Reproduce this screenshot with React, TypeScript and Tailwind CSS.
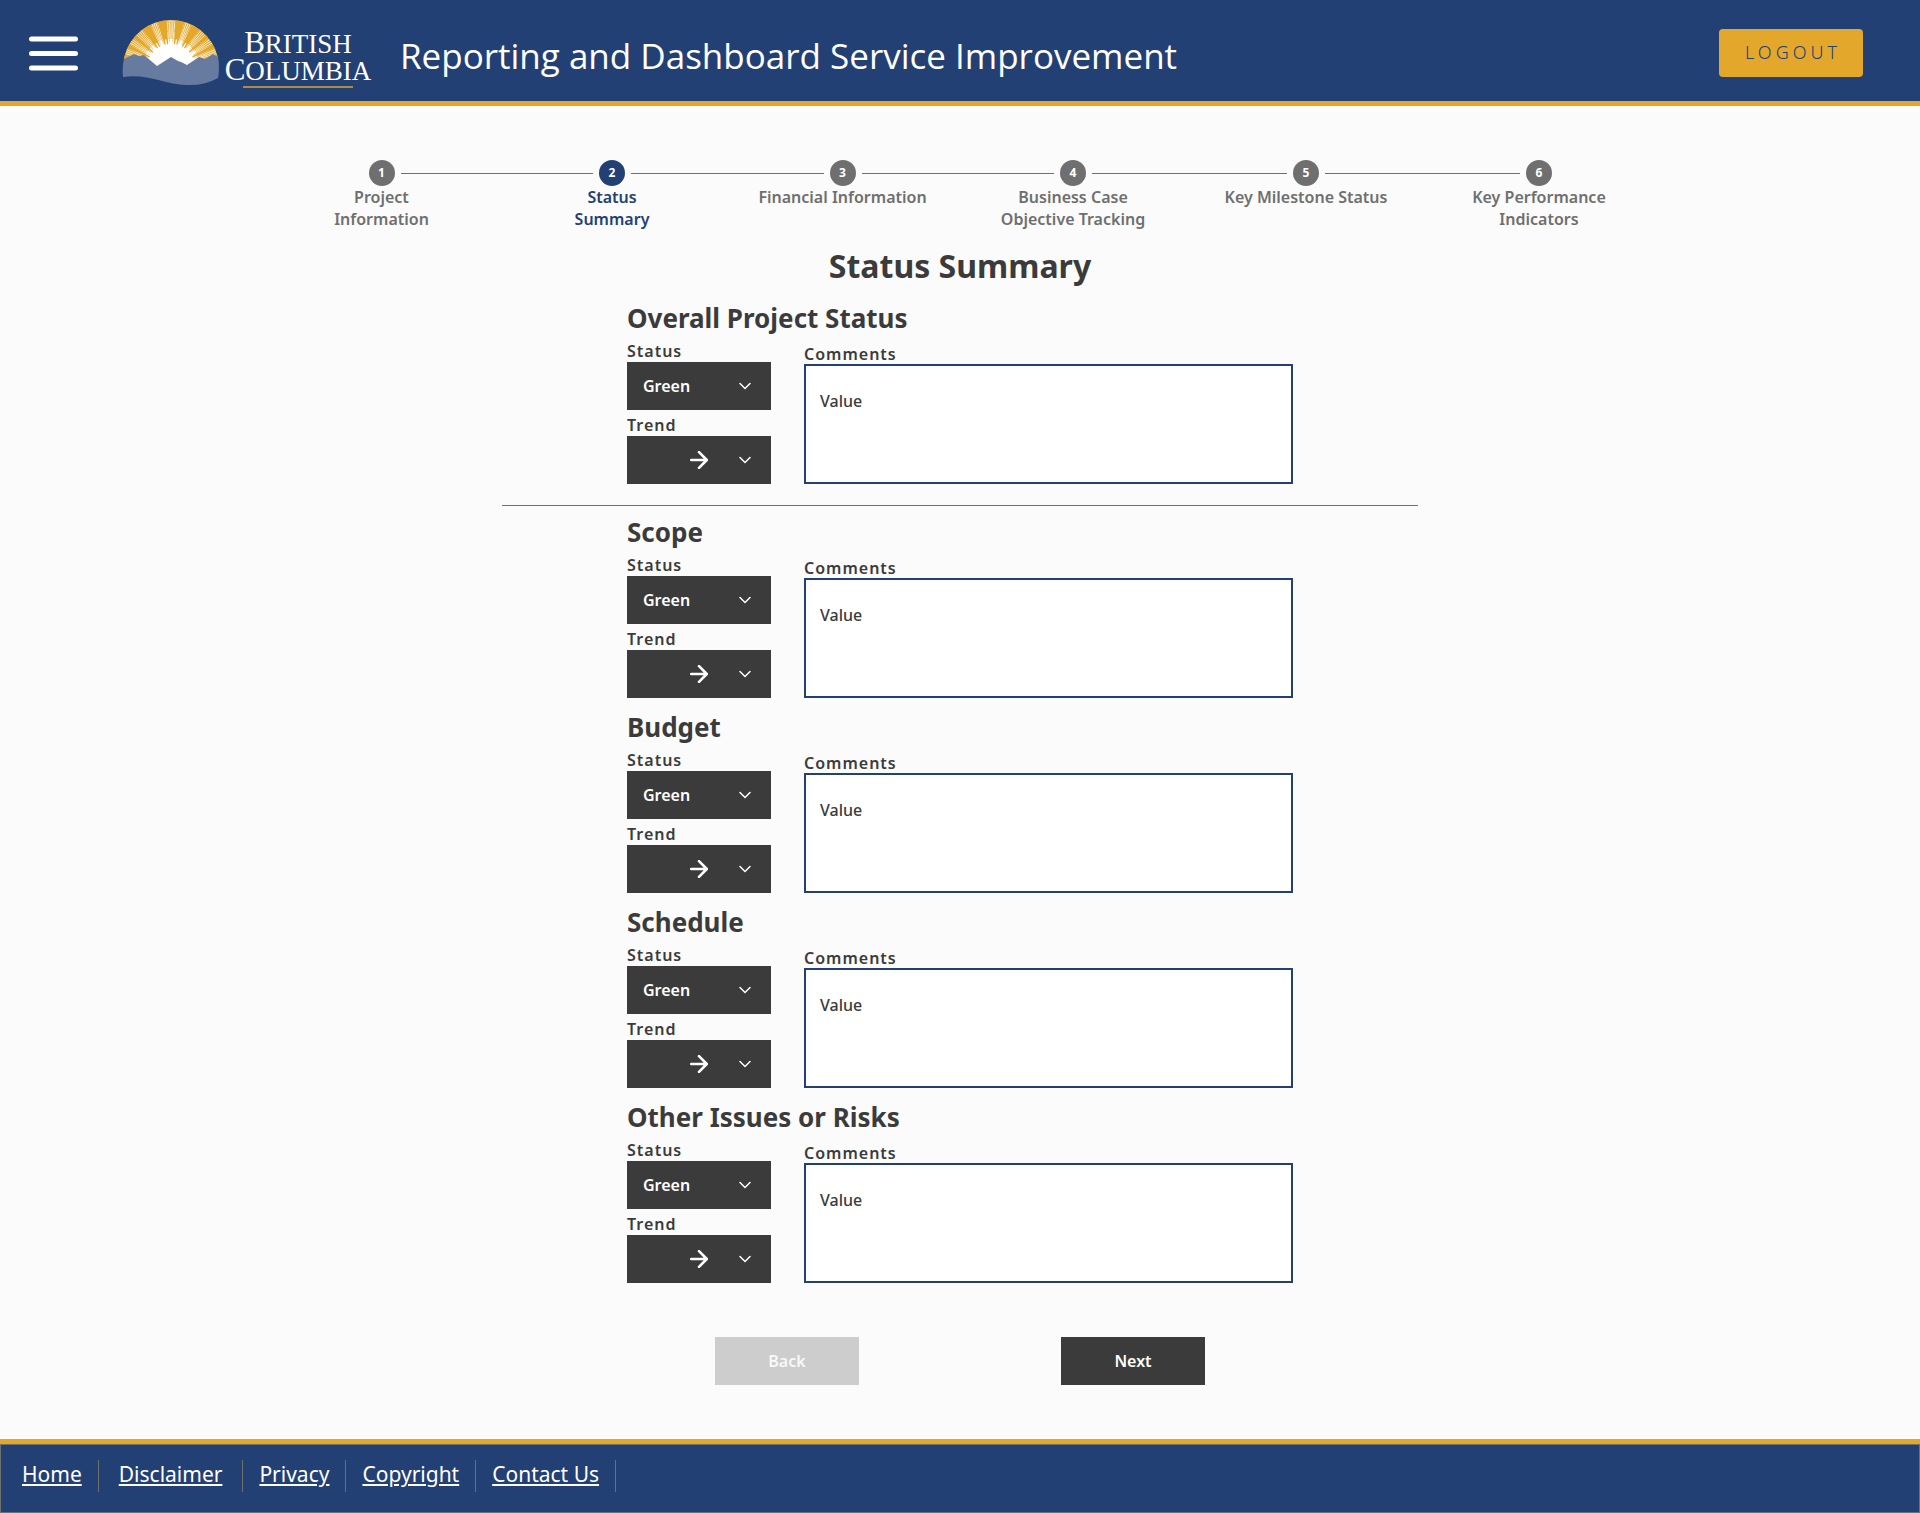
import React, { useId } from "react";

const spikeAngles = [-82, -76, -63, -49, -34, -28, -14, -8, 8, 14, 28, 34, 49, 63, 76, 82];
const fanAngles = [-70, -56, -41, -21, 0, 21, 41, 56, 70];

function at(angle: number, radius: number) {
  const a = (angle * Math.PI) / 180;
  return `${(51 + radius * Math.sin(a)).toFixed(2)} ${(52 - radius * Math.cos(a)).toFixed(2)}`;
}

function Emblem() {
  const clip = useId();
  return (
    <svg viewBox="0 0 100 76" className="h-[76px] w-[100px]" aria-hidden="true">
      <defs>
        <clipPath id={clip}>
          <path d="M4.050 42A48 48 0 0 1 97.950 42V52H4.050Z" />
        </clipPath>
      </defs>
      <g clipPath={`url(#${clip})`}>
        <rect x="0" y="0" width="102" height="56" fill="#E3A82B" />
        <circle cx="51" cy="52" r="29" fill="#fff" />
        {fanAngles.map((f) => (
          <g key={f} fill="none" stroke="#fff">
            {[-5, -2.5, 0, 2.5, 5].map((d) => (
              <path key={d} d={`M${at(f + d * 0.8, 28)}L${at(f + d, 49)}`} strokeWidth="0.8" />
            ))}
            {[-7, 7].map((d) => (
              <path key={d} d={`M${at(f + d, 24)}L${at(f + d * 0.9, 36)}`} strokeWidth="1" />
            ))}
          </g>
        ))}
        {spikeAngles.map((s) => (
          <path key={s} d={`M${at(s - 2.6, 49)}L${at(s - 1.3, 24)}L${at(s + 1.3, 24)}L${at(s + 2.6, 49)}Z`} fill="#E3A82B" />
        ))}
        {fanAngles.map((f) =>
          [-3.6, 3.6].map((d) => (
            <path key={`${f}${d}`} d={`M${at(f + d - 1.2, 49)}L${at(f + d, 26)}L${at(f + d + 1.2, 25)}Z`} fill="#E3A82B" />
          )),
        )}
      </g>
      <path
        d="M4 43L14 38L19 40L24 39L37 50L51 41L58 45L61 46L67 49L79 41L85 43L93 38L98 41Q100 51 98 62Q84 70 66 69C45 68 25 57 3 61Q2 50 4 43Z"
        fill="#677A9F"
      />
    </svg>
  );
}

function Logo() {
  return (
    <div className="flex shrink-0" role="img" aria-label="British Columbia">
      <Emblem />
      <div className="flex w-[156px] flex-col items-center pt-3.5 font-['Liberation_Serif',serif] text-[27px] leading-[25px] text-white">
        <div className="first-letter:text-[31px]">BRITISH</div>
        <div className="first-letter:text-[31px]">COLUMBIA</div>
        <div className="mt-0.5 h-0.5 w-[110px] bg-[#AD8B41]" />
      </div>
    </div>
  );
}

const steps = [
  ["Project", "Information"],
  ["Status", "Summary"],
  ["Financial Information"],
  ["Business Case", "Objective Tracking"],
  ["Key Milestone Status"],
  ["Key Performance", "Indicators"],
];

function Stepper() {
  return (
    <ol className="mx-auto grid w-full max-w-[1388px] grid-cols-[231fr_230fr_231fr_230fr_236fr_230fr]">
      {steps.map((lines, i) => (
        <li
          key={lines[0]}
          aria-current={i === 1 ? "step" : undefined}
          className={`flex flex-col text-center text-base leading-[22px] font-semibold ${i === 1 ? "text-[#234075]" : "text-[#6f6f6f]"}`}
        >
          <div className="flex items-center gap-1.5">
            <span className={`h-px flex-1 ${i === 0 ? "" : "bg-[#6f6f6f]"}`} />
            <span
              className={`flex size-[26px] items-center justify-center rounded-full text-xs font-bold text-white ${i === 1 ? "bg-[#234075]" : "bg-[#6f6f6f]"}`}
            >
              {i + 1}
            </span>
            <span className={`h-px flex-1 ${i === steps.length - 1 ? "" : "bg-[#6f6f6f]"}`} />
          </div>
          {lines.map((line) => (
            <span key={line}>{line}</span>
          ))}
        </li>
      ))}
    </ol>
  );
}

function Chevron() {
  return (
    <svg viewBox="0 0 12 8" className="pointer-events-none absolute top-5 right-5 h-2 w-3" aria-hidden="true">
      <path d="M1 1.5L6 6.5L11 1.5" fill="none" stroke="#fff" strokeWidth="1.5" strokeLinecap="round" />
    </svg>
  );
}

function Arrow() {
  return (
    <svg viewBox="0 0 18 18" className="pointer-events-none absolute top-[15px] left-[63px] size-[18px]" aria-hidden="true">
      <path d="M1.200 9H16.500M9 1.200L16.800 9L9 16.800" fill="none" stroke="#fff" strokeWidth="2.6" strokeLinecap="round" strokeLinejoin="round" />
    </svg>
  );
}

const selectClass = "h-12 w-full cursor-pointer appearance-none bg-[#3b3b3b] px-4 text-base font-semibold text-white";

function StatusSection({ title }: { title: string }) {
  const id = useId();
  return (
    <section className="mx-auto w-full max-w-[666px]">
      <h2 className="pt-[11px] pb-1 text-[26px] leading-9 font-bold">{title}</h2>
      <div className="flex items-end gap-[33px]">
        <div className="flex w-36 shrink-0 flex-col font-semibold">
          <label htmlFor={`${id}s`} className="leading-[22px] tracking-[1px]">Status</label>
          <div className="relative mb-1">
            <select id={`${id}s`} className={selectClass} defaultValue="Green">
              <option>Green</option>
              <option>Yellow</option>
              <option>Red</option>
            </select>
            <Chevron />
          </div>
          <label htmlFor={`${id}t`} className="leading-[22px] tracking-[1px]">Trend</label>
          <div className="relative">
            <select id={`${id}t`} className={selectClass} defaultValue="">
              <option value="" aria-label="Steady" />
            </select>
            <Arrow />
            <Chevron />
          </div>
        </div>
        <div className="flex flex-1 flex-col">
          <label htmlFor={`${id}c`} className="leading-5 font-semibold tracking-[1px]">Comments</label>
          <textarea
            id={`${id}c`}
            defaultValue="Value"
            className="block h-[120px] w-full resize-none border-2 border-[#234075] bg-white px-3.5 pt-6 text-base leading-[22px] font-medium"
          />
        </div>
      </div>
    </section>
  );
}

const links = [
  { label: "Home", pad: "pr-4 pl-[21px]" },
  { label: "Disclaimer", pad: "px-5" },
  { label: "Privacy", pad: "px-4" },
  { label: "Copyright", pad: "px-4" },
  { label: "Contact Us", pad: "px-4" },
];

export default function App() {
  return (
    <div className="flex min-h-screen flex-col bg-[#fbfbfb] font-['Noto_Sans',sans-serif] text-[#3b3b3b]">
      <header className="flex h-[106px] items-center border-b-5 border-[#E3A82B] bg-[#234075] pt-[5px] pr-[57px] pl-[29px]">
        <button type="button" aria-label="Menu" className="w-[49px]">
          <svg viewBox="0 0 49 35" className="h-[35px] w-[49px]" aria-hidden="true">
            <path d="M2.500 3H46.500M2.500 17.500H46.500M2.500 32H46.500" stroke="#fff" strokeWidth="5" strokeLinecap="round" />
          </svg>
        </button>
        <div className="ml-[42px] pt-0.5">
          <Logo />
        </div>
        <h1 className="ml-6 flex-1 pt-1.5 font-['Open_Sans',sans-serif] text-[35px] text-white">
          Reporting and Dashboard Service Improvement
        </h1>
        <button
          type="button"
          className="h-12 w-36 rounded-sm bg-[#E3A82B] pb-0.5 pl-1 text-lg font-light tracking-[4px] text-[#234075]"
        >
          LOGOUT
        </button>
      </header>
      <main className="flex flex-1 flex-col pt-[54px]">
        <Stepper />
        <p role="heading" aria-level={1} className="pt-[13px] text-center text-[32px] leading-[46px] font-bold">
          Status Summary
        </p>
        <StatusSection title="Overall Project Status" />
        <hr className="mx-auto mt-[21px] -mb-[3px] w-full max-w-[916px] border-[#6f6f6f]" />
        <StatusSection title="Scope" />
        <StatusSection title="Budget" />
        <StatusSection title="Schedule" />
        <StatusSection title="Other Issues or Risks" />
        <div className="mx-auto flex w-full max-w-[490px] justify-between pt-[54px] pb-[54px]">
          <button type="button" className="h-12 w-36 bg-[#cdcdcd] font-semibold text-[#f8f8f8]">Back</button>
          <button type="button" className="h-12 w-36 bg-[#3b3b3b] font-semibold text-white">Next</button>
        </div>
      </main>
      <footer className="border-t-5 border-[#E3A82B] bg-[#234075]">
        <nav className="flex h-[69px] border border-[#6f6f6f] pt-[15px]">
          {links.map(({ label, pad }) => (
            <div key={label} className={`flex h-8 items-center border-r border-[#6f6f6f] pb-1 ${pad}`}>
              <a href="#" className="text-[21px] leading-7 text-white underline">{label}</a>
            </div>
          ))}
        </nav>
      </footer>
    </div>
  );
}
